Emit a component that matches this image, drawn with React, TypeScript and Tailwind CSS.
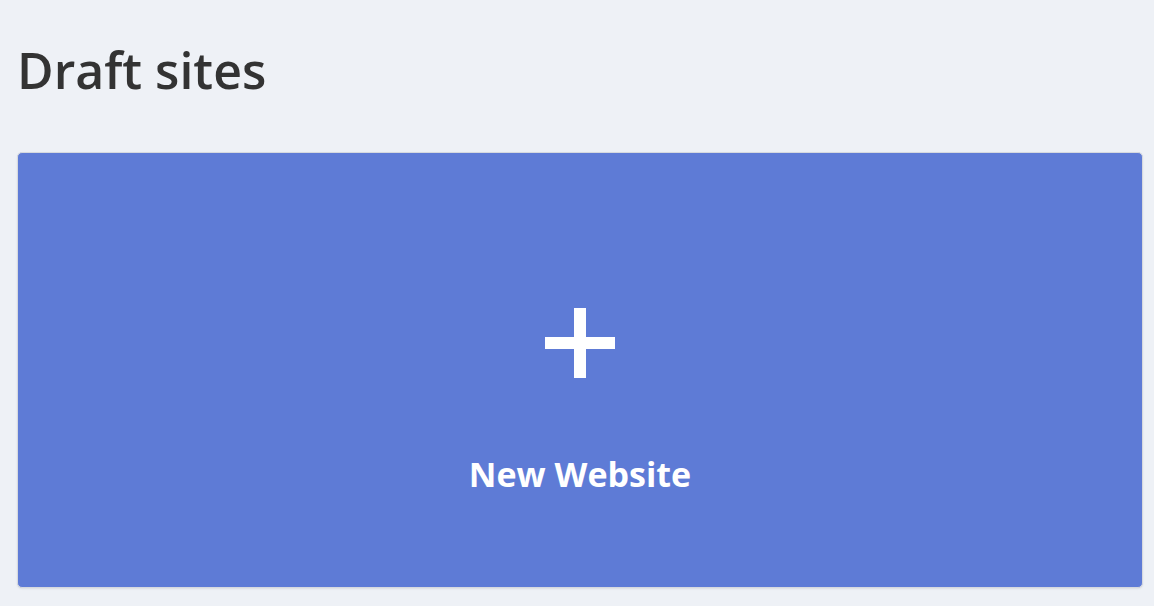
import React from "react";

function PlusIcon() {
  return (
    <svg width="70" height="70" viewBox="0 0 70 70" className="block">
      <rect x="29" y="0" width="12" height="70" fill="white" />
      <rect x="0" y="29" width="70" height="12" fill="white" />
    </svg>
  );
}

function NewSiteCard() {
  return (
    <button className="flex h-[436px] w-full cursor-pointer flex-col items-center justify-start rounded-[5px] border border-[#d6d9df] bg-[#5e7bd6] pt-[155px] shadow-[0_1px_2px_rgba(0,0,0,0.08)]">
      <PlusIcon />
      <span className="mt-[79px] text-[34px] font-bold leading-none text-white">New Website</span>
    </button>
  );
}

export default function App() {
  return (
    <div
      className="min-h-screen bg-[#eef1f6] pl-[17px] pr-[11px] pt-[38px]"
      style={{ fontFamily: '"Open Sans", Lato, sans-serif' }}
    >
      <h1 className="text-[50px] font-semibold leading-[64px] text-[#333333]">Draft sites</h1>
      <div className="mt-[50px]">
        <NewSiteCard />
      </div>
    </div>
  );
}
